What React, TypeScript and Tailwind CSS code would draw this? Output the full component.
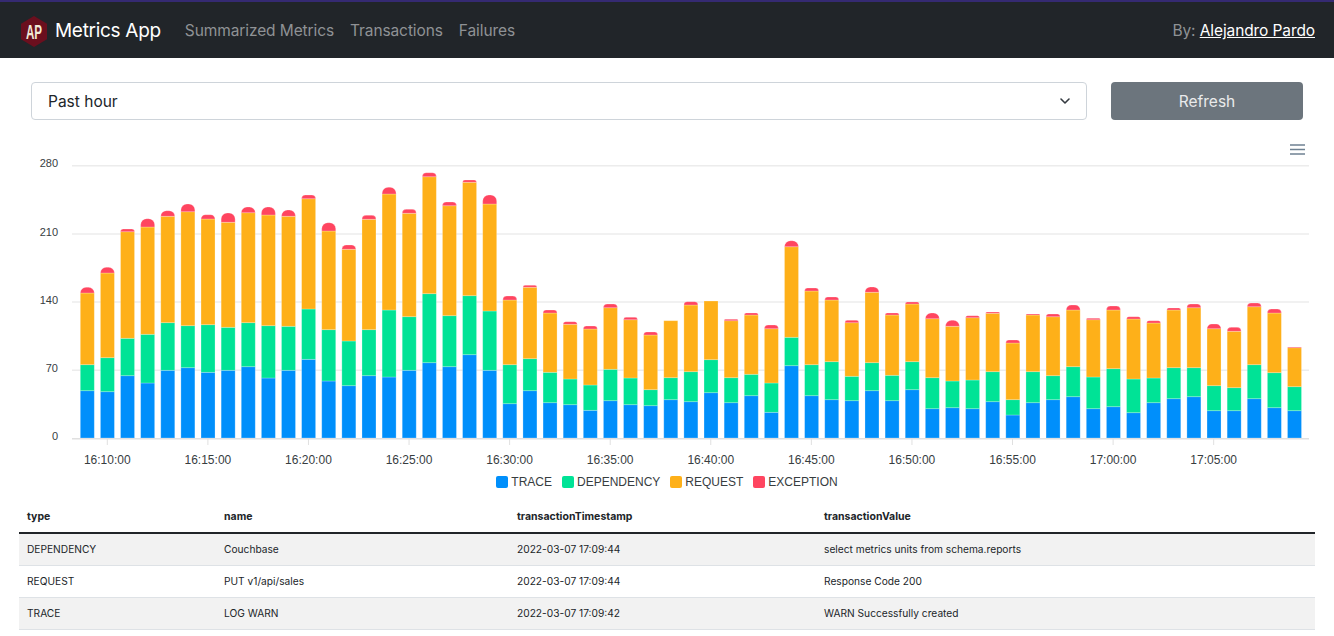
import { ChevronDown } from 'lucide-react';

const COLORS = { trace: '#008ffb', dependency: '#00e396', request: '#feb019', exception: '#ff4560' };

// y of the top of each stacked segment: trace, dependency, request, exception
const BARS: [number, number, number, number][] = [
  [390.7, 364.7, 293, 287.3], [391.7, 357.7, 273, 267.3], [375.7, 338.3, 231.7, 229], [383, 334.3, 227, 218.7],
  [370.3, 322.7, 216.3, 210.7], [367.7, 325.7, 211.7, 204], [372.3, 324.7, 219, 214.7], [370.3, 327.3, 222.3, 213],
  [366.7, 322.7, 212.7, 207], [378, 325.7, 215, 207], [370.3, 326.3, 216.3, 210], [359.3, 309, 198.7, 195],
  [381, 329.7, 231, 222.7], [385.7, 341, 249.3, 245], [375.7, 329.7, 219.3, 215.3], [377, 310, 194, 187.3],
  [370.3, 316.7, 213.3, 209.3], [362.7, 293.7, 176.7, 172.7], [366.7, 315.7, 205.7, 202], [354.7, 295.7, 182.3, 180],
  [370.3, 311, 204, 195], [403.7, 364.7, 300, 296], [390.7, 358.7, 287.3, 285.3], [402.7, 372.3, 313, 310],
  [404.7, 379, 324.3, 321.7], [410.3, 385, 329, 326], [400.7, 369.3, 307.7, 304], [404.7, 378, 319.7, 317.3],
  [405.7, 389.7, 335, 332], [399.7, 377.7, 320.7, 320.7], [401.7, 371.7, 305, 301.7], [392.7, 359.7, 301, 301],
  [402.7, 377.7, 320.7, 319.3], [395.7, 374.3, 315, 313], [412.3, 383, 328.7, 325], [365.7, 337.3, 246.7, 240.7],
  [395.7, 364.7, 291, 288], [399.7, 361.7, 300, 297], [400.7, 376.3, 322.7, 320.3], [390.7, 362.7, 292.3, 287],
  [400.7, 375.3, 315, 313], [389.7, 361.7, 304, 302], [408.7, 377.7, 318.7, 313], [407.7, 381, 326.3, 320.3],
  [408.7, 380, 317.7, 315.7], [401.7, 371.7, 313.3, 312], [415, 399.7, 343, 340], [402.7, 371.7, 315, 314],
  [399.7, 375.7, 316.7, 314], [396.7, 366.7, 310, 305], [408.7, 377, 319.7, 318.3], [406.7, 368.7, 310, 306],
  [412.7, 379, 319, 316.7], [402.7, 378, 323, 320.7], [398.7, 367.7, 310, 308], [396.7, 367.7, 307.7, 304],
  [410.7, 385.7, 328.7, 324], [410.7, 387.7, 331.3, 327.3], [398.7, 364.7, 306.7, 303], [407.7, 372.7, 313, 309],
  [410.7, 386.7, 347.7, 347],
];

const BASELINE = 438;
const BAR_WIDTH = 14;

const Y_TICKS = [
  { label: '280', y: 165.7 },
  { label: '210', y: 234 },
  { label: '140', y: 302 },
  { label: '70', y: 370.3 },
];

const X_LABELS = [
  '16:10:00', '16:15:00', '16:20:00', '16:25:00', '16:30:00', '16:35:00',
  '16:40:00', '16:45:00', '16:50:00', '16:55:00', '17:00:00', '17:05:00',
];

const LEGEND = [
  { label: 'TRACE', color: 'bg-[#008ffb]' },
  { label: 'DEPENDENCY', color: 'bg-[#00e396]' },
  { label: 'REQUEST', color: 'bg-[#feb019]' },
  { label: 'EXCEPTION', color: 'bg-[#ff4560]' },
];

const ROWS = [
  { type: 'DEPENDENCY', name: 'Couchbase', timestamp: '2022-03-07 17:09:44', value: 'select metrics units from schema.reports' },
  { type: 'REQUEST', name: 'PUT v1/api/sales', timestamp: '2022-03-07 17:09:44', value: 'Response Code 200' },
  { type: 'TRACE', name: 'LOG WARN', timestamp: '2022-03-07 17:09:42', value: 'WARN Successfully created' },
];

function Logo() {
  return (
    <svg width="26" height="31" viewBox="0 0 26 31" className="shrink-0 overflow-visible">
      <polygon points="13,0 26,7.75 26,23.25 13,31 0,23.25 0,7.75" fill="#6b0f1e" />
      <text
        x="13"
        y="23"
        textAnchor="middle"
        fontSize="21"
        fontWeight="700"
        fill="#f1ead6"
        textLength="16"
        lengthAdjust="spacingAndGlyphs"
        fontFamily="'Liberation Sans', sans-serif"
      >
        AP
      </text>
    </svg>
  );
}

function Header() {
  return (
    <header className="flex h-[58px] items-center justify-between border-t-2 border-[#352a72] bg-[#212529] pl-[21px] pr-[19px] pt-[2px] text-[15.5px] tracking-[-0.1px]">
      <div className="flex items-center">
        <Logo />
        <span className="ml-2 text-[19px] tracking-[-0.3px] text-white">Metrics App</span>
        <nav className="ml-6 flex gap-4 text-[#8f9295]">
          <a>Summarized Metrics</a>
          <a>Transactions</a>
          <a>Failures</a>
        </nav>
      </div>
      <div className="text-[#8f9295]">
        By: <a className="text-white underline">Alejandro Pardo</a>
      </div>
    </header>
  );
}

function Filters() {
  return (
    <div className="flex gap-6 pl-[31px] pr-[31px] pt-6 text-[15.5px]">
      <div className="flex h-[38px] flex-1 items-center justify-between rounded border border-[#ced4da] pl-4 pr-[13px] text-[#212529]">
        <span className="pt-[2px]">Past hour</span>
        <ChevronDown size={16} strokeWidth={2.4} color="#343a40" />
      </div>
      <button className="h-[38px] w-[192px] rounded bg-[#6c757d] pt-[2px] text-[#e9eaeb]">Refresh</button>
    </div>
  );
}

function Segment({ x, top, bottom, color, rounded }: { x: number; top: number; bottom: number; color: string; rounded?: boolean }) {
  if (bottom - top <= 0) return null;
  if (rounded) {
    const r = Math.min(bottom - top, 6);
    const d = `M${x} ${bottom}V${top + r}A${r} ${r} 0 0 1 ${x + r} ${top}H${x + BAR_WIDTH - r}A${r} ${r} 0 0 1 ${x + BAR_WIDTH} ${top + r}V${bottom}Z`;
    return <path d={d} fill={color} stroke="#fff" strokeOpacity={0.3} strokeWidth={0.8} />;
  }
  return <rect x={x} y={top} width={BAR_WIDTH} height={bottom - top} fill={color} stroke="#fff" strokeOpacity={0.3} strokeWidth={0.8} />;
}

function Chart() {
  return (
    <svg width="1296" height="338" viewBox="19 135 1296 338" className="ml-[19px] mt-[15px] block" fontFamily="'Liberation Sans', Arial, sans-serif">
      {Y_TICKS.map((t) => (
        <g key={t.label}>
          <line x1="72" x2="1309" y1={t.y} y2={t.y} stroke="#ececec" strokeWidth="1.4" />
          <text x="58" y={t.y + 1.5} textAnchor="end" fontSize="11" fill="#373d3f">
            {t.label}
          </text>
        </g>
      ))}
      <text x="58" y="440" textAnchor="end" fontSize="11" fill="#373d3f">
        0
      </text>

      {BARS.map(([trace, dependency, request, exception], i) => {
        const x = 80.3 + 20.12 * i;
        return (
          <g key={i}>
            <Segment x={x} top={trace} bottom={BASELINE} color={COLORS.trace} />
            <Segment x={x} top={dependency} bottom={trace} color={COLORS.dependency} />
            <Segment x={x} top={request} bottom={dependency} color={COLORS.request} />
            <Segment x={x} top={exception} bottom={request} color={COLORS.exception} rounded />
          </g>
        );
      })}

      <line x1="72" x2="1309" y1="438.7" y2="438.7" stroke="#e0e0e0" strokeWidth="1.6" />
      {X_LABELS.map((label, i) => {
        const x = 107.3 + 100.58 * i;
        return (
          <g key={label}>
            <line x1={x} x2={x} y1="439" y2="445" stroke="#e0e0e0" />
            <text x={x} y="464" textAnchor="middle" fontSize="12" fill="#373d3f">
              {label}
            </text>
          </g>
        );
      })}

      <g stroke="#6e8192" strokeWidth="1.5">
        <line x1="1290" x2="1305" y1="145" y2="145" />
        <line x1="1290" x2="1305" y1="149.5" y2="149.5" />
        <line x1="1290" x2="1305" y1="154" y2="154" />
      </g>
    </svg>
  );
}

function Legend() {
  return (
    <div className="flex h-[18px] items-center justify-center gap-[10px] font-['Liberation_Sans',Arial,sans-serif] text-xs text-[#373d3f]">
      {LEGEND.map((item) => (
        <div key={item.label} className="flex items-center gap-[3px]">
          <span className={`h-3 w-3 rounded-[2px] ${item.color}`} />
          {item.label}
        </div>
      ))}
    </div>
  );
}

function TransactionsTable() {
  return (
    <div className="mx-[19px] mt-[9px]">
      <table className="w-full table-fixed border-collapse text-[10.2px] text-[#212529]">
        <thead>
          <tr className="h-[33px] border-b-2 border-[#212529] text-left text-[10.5px]">
            <th className="w-[197px] px-2 pt-[1px] font-bold">type</th>
            <th className="w-[293px] px-2 pt-[1px] font-bold">name</th>
            <th className="w-[307px] px-2 pt-[1px] font-bold">transactionTimestamp</th>
            <th className="px-2 pt-[1px] font-bold">transactionValue</th>
          </tr>
        </thead>
        <tbody>
          {ROWS.map((row, i) => (
            <tr key={row.timestamp + row.type} className={`h-8 border-b border-[#dee2e6] ${i % 2 === 0 ? 'bg-[#f2f2f2]' : 'bg-white'}`}>
              <td className="px-2 pt-[1px]">{row.type}</td>
              <td className="px-2 pt-[1px]">{row.name}</td>
              <td className="px-2 pt-[1px]">{row.timestamp}</td>
              <td className="px-2 pt-[1px]">{row.value}</td>
            </tr>
          ))}
        </tbody>
      </table>
    </div>
  );
}

export default function App() {
  return (
    <div className="min-h-[636px] bg-white font-['Inter',sans-serif]">
      <Header />
      <Filters />
      <Chart />
      <Legend />
      <TransactionsTable />
    </div>
  );
}
